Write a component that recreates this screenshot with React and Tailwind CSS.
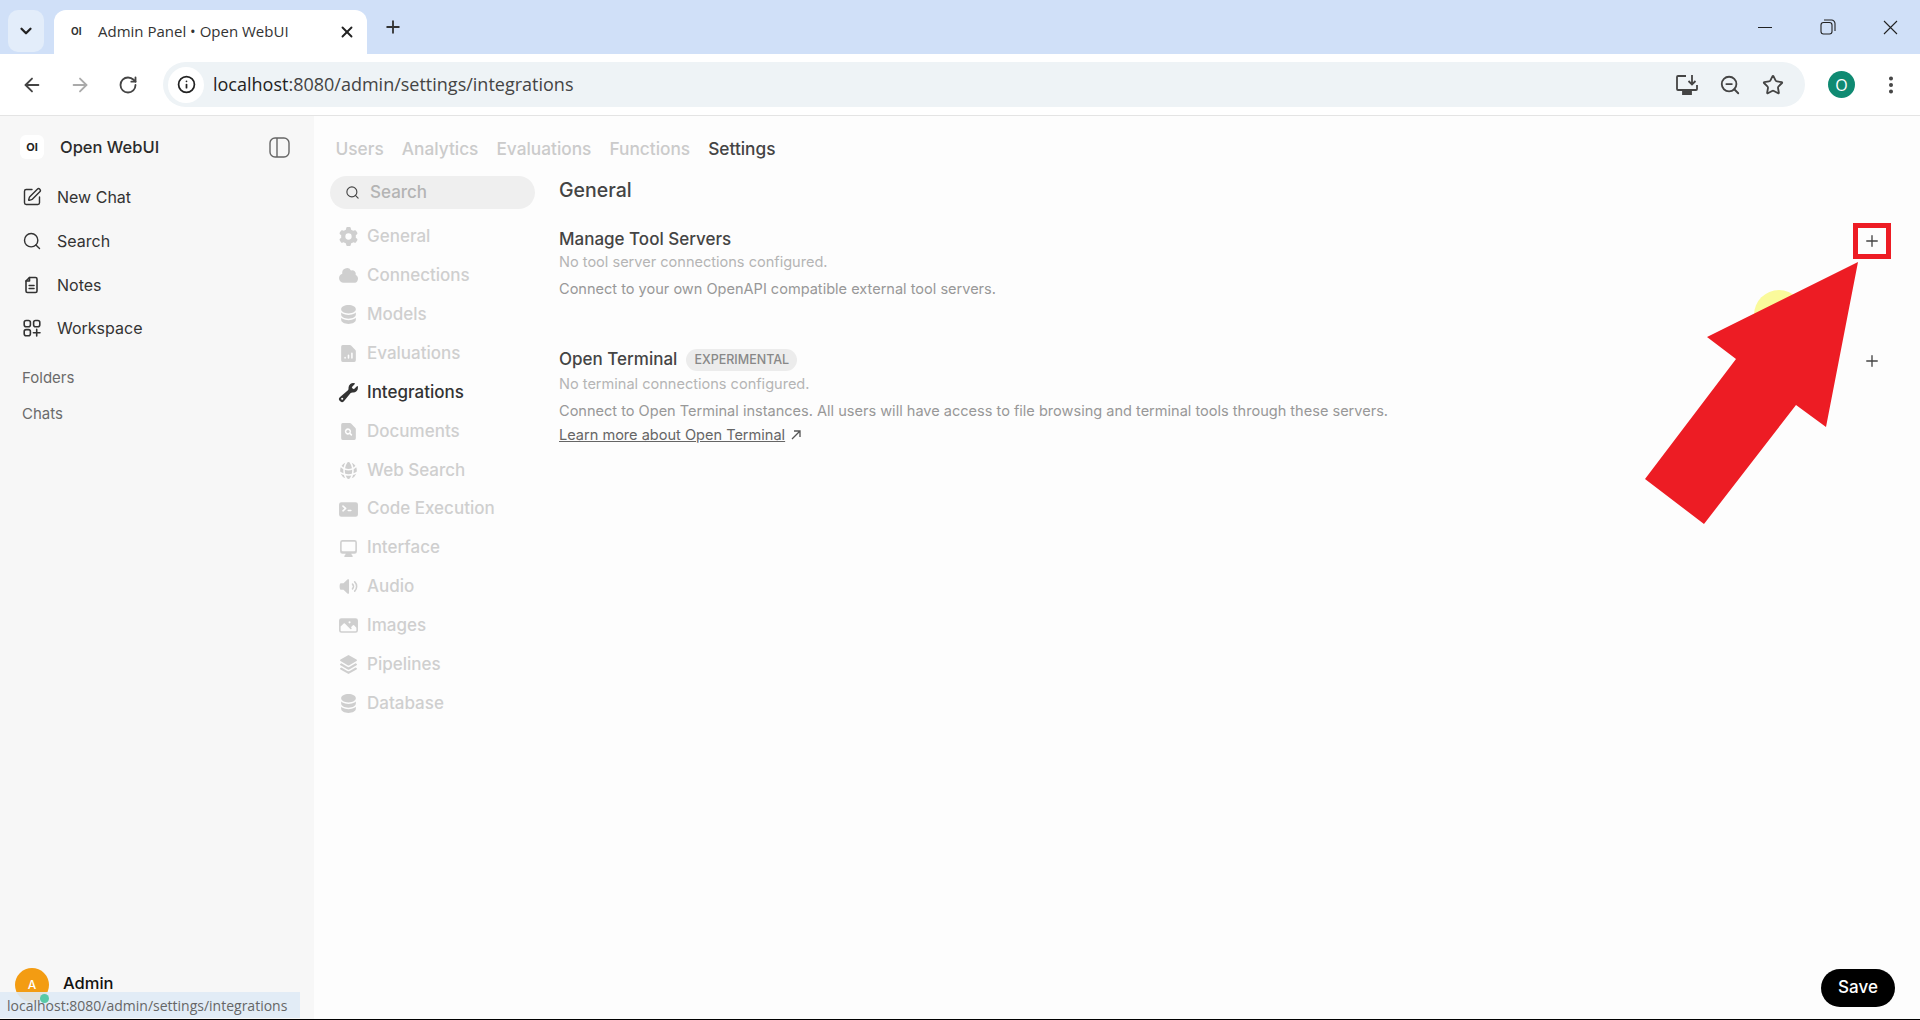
import { ArrowLeft, ArrowRight, ChevronDown, Info, MoreVertical, Plus, RotateCw, Search, SquarePen, Star, X, ZoomOut } from "lucide-react";
import {
  HiMiniCircleStack,
  HiMiniCloud,
  HiMiniCog6Tooth,
  HiMiniCommandLine,
  HiMiniComputerDesktop,
  HiMiniDocumentChartBar,
  HiMiniDocumentMagnifyingGlass,
  HiMiniGlobeAlt,
  HiMiniPhoto,
  HiMiniSpeakerWave,
  HiMiniSquare3Stack3D,
  HiMiniWrench,
} from "react-icons/hi2";

const inter = "font-['Inter',sans-serif]";
const chromeFont = "font-['Open_Sans',sans-serif]";

const topTabs = ["Users", "Analytics", "Evaluations", "Functions", "Settings"];

const settingsNav = [
  { label: "General", Icon: HiMiniCog6Tooth },
  { label: "Connections", Icon: HiMiniCloud },
  { label: "Models", Icon: HiMiniCircleStack },
  { label: "Evaluations", Icon: HiMiniDocumentChartBar },
  { label: "Integrations", Icon: HiMiniWrench, active: true },
  { label: "Documents", Icon: HiMiniDocumentMagnifyingGlass },
  { label: "Web Search", Icon: HiMiniGlobeAlt },
  { label: "Code Execution", Icon: HiMiniCommandLine },
  { label: "Interface", Icon: HiMiniComputerDesktop },
  { label: "Audio", Icon: HiMiniSpeakerWave },
  { label: "Images", Icon: HiMiniPhoto },
  { label: "Pipelines", Icon: HiMiniSquare3Stack3D },
  { label: "Database", Icon: HiMiniCircleStack },
];

const NotesIcon = () => (
  <svg width="20" height="20" viewBox="0 0 20 20" fill="none" stroke="#333" strokeWidth="1.6" strokeLinejoin="round" strokeLinecap="round">
    <path d="M7.5 2.5h6a1.5 1.5 0 0 1 1.5 1.5v12a1.5 1.5 0 0 1-1.5 1.5h-8A1.5 1.5 0 0 1 4 16V6z" />
    <path d="M7.5 2.5V6H4" />
    <path d="M7.2 10.5h4.8M7.2 13.5h4.8" />
  </svg>
);

const WorkspaceIcon = () => (
  <svg width="20" height="20" viewBox="0 0 20 20" fill="none" stroke="#333" strokeWidth="1.6" strokeLinecap="round">
    <rect x="2.2" y="2.5" width="6.2" height="6.2" rx="2" />
    <rect x="11.6" y="2.5" width="6.2" height="6.2" rx="2" />
    <rect x="2.2" y="11.6" width="6.2" height="6.2" rx="2" />
    <path d="M14.7 11.4v6.6M11.4 14.7h6.6" />
  </svg>
);

const PanelIcon = () => (
  <svg width="21" height="21" viewBox="0 0 21 21" fill="none" stroke="#666" strokeWidth="1.4">
    <rect x="1" y="1" width="19" height="19" rx="5" />
    <path d="M8 1v19" />
  </svg>
);

const InstallIcon = () => (
  <svg width="24" height="22" viewBox="0 0 24 22" fill="none" stroke="#444" strokeWidth="1.8">
    <path d="M11 2H3a1 1 0 0 0-1 1v12a1 1 0 0 0 1 1h18a1 1 0 0 0 1-1v-4" />
    <path d="M17 1v9M13.5 7l3.5 3.5L20.500 7" />
    <path d="M8 18h8v2H8z" fill="#444" />
  </svg>
);

const Tabstrip = () => (
  <div className={`h-[54px] flex items-end bg-[#d0e0f8] ${chromeFont}`}>
    <div className="ml-[8px] mb-[2px] w-[36px] h-[42px] rounded-[10px] bg-[#e3edfa] flex items-center justify-center">
      <ChevronDown size={18} strokeWidth={3} color="#222" />
    </div>
    <div className="ml-[10px] w-[313px] h-[44px] rounded-t-[12px] bg-white flex items-center pb-[1px]">
      <span className={`ml-[17px] w-[27px] text-[10px] font-bold text-[#333] ${inter}`}>OI</span>
      <span className="text-[15px] text-[#333] w-[240px]">Admin Panel • Open WebUI</span>
      <X size={18} strokeWidth={2.5} color="#222" />
    </div>
    <div className="ml-[16px] h-[54px] flex items-center">
      <Plus size={20} strokeWidth={2.2} color="#333" />
    </div>
    <div className="ml-auto h-[54px] flex items-center pr-[22px]">
      <div className="w-[14px] h-[1px] bg-[#222] mr-[48px]" />
      <svg width="16" height="16" viewBox="0 0 16 16" fill="none" stroke="#222" strokeWidth="1.1" className="mr-[47px]">
        <rect x="1" y="3.500" width="11" height="11.500" rx="2.500" />
        <path d="M4 1h7.500A3.500 3.500 0 0 1 15 4.500V12" />
      </svg>
      <svg width="15" height="15" viewBox="0 0 15 15" stroke="#222" strokeWidth="1.1">
        <path d="M1 1l13 13M14 1L1 14" />
      </svg>
    </div>
  </div>
);

const Toolbar = () => (
  <div className={`h-[62px] flex items-center bg-white border-b border-[#e4e4e4] ${chromeFont}`}>
    <div className="w-[163px] flex items-center pl-[21px] gap-[26px]">
      <ArrowLeft size={22} strokeWidth={2} color="#444" />
      <ArrowRight size={22} strokeWidth={2} color="#aaa" />
      <RotateCw size={20} strokeWidth={2.2} color="#444" className="ml-[1px]" />
    </div>
    <div className="w-[1642px] h-[45px] rounded-full bg-[#eef3f6] flex items-center">
      <div className="ml-[5px] w-[36px] h-[36px] rounded-full bg-white flex items-center justify-center">
        <Info size={19} strokeWidth={2.2} color="#222" />
      </div>
      <span className="ml-[9px] text-[18px] text-[#444]">
        <span className="text-[#222]">localhost</span>:8080/admin/settings/integrations
      </span>
      <div className="ml-auto flex items-center pr-[21px]">
        <InstallIcon />
        <ZoomOut size={22} strokeWidth={2} color="#444" className="ml-[20px]" />
        <Star size={22} strokeWidth={2} color="#444" className="ml-[21px]" />
      </div>
    </div>
    <div className="w-[27px] h-[27px] ml-[23px] rounded-full bg-[#0f8a72] text-white text-[16px] flex items-center justify-center">
      O
    </div>
    <MoreVertical size={22} strokeWidth={2.4} color="#444" className="ml-[25px]" />
  </div>
);

const SidebarRow = ({ icon, label }) => (
  <div className="h-[43.67px] flex items-center pl-[22px]">
    <span className="w-[35px] flex items-center">{icon}</span>
    <span className="text-[16px] text-[#333]">{label}</span>
  </div>
);

const Sidebar = () => (
  <div className={`w-[314px] shrink-0 bg-[#f7f7f7] flex flex-col ${inter}`}>
    <div className="h-[59.500px] pt-[3px] flex items-center pl-[20px] pr-[24px]">
      <span className="w-[24px] h-[24px] rounded-[6px] bg-white text-[11px] font-bold text-[#222] flex items-center justify-center">OI</span>
      <span className="ml-[16px] text-[16.500px] font-medium text-[#2b2b2b]">Open WebUI</span>
      <span className="ml-auto flex"><PanelIcon /></span>
    </div>
    <SidebarRow icon={<SquarePen size={20} strokeWidth={1.7} color="#333" />} label="New Chat" />
    <SidebarRow icon={<Search size={20} strokeWidth={1.7} color="#333" />} label="Search" />
    <SidebarRow icon={<NotesIcon />} label="Notes" />
    <SidebarRow icon={<WorkspaceIcon />} label="Workspace" />
    <div className="mt-[10.500px] h-[36px] flex items-center pl-[22px] text-[15px] text-[#6b6b6b]">Folders</div>
    <div className="h-[36px] flex items-center pl-[22px] text-[15px] text-[#6b6b6b]">Chats</div>
    <div className="mt-auto mb-[17px] h-[34px] flex items-center pl-[15px]">
      <div className="w-[34px] h-[34px] rounded-full bg-[#f39c12] text-white text-[12px] font-medium flex items-center justify-center">A</div>
      <span className="ml-[14px] text-[16.500px] font-medium text-[#111] -mt-[4px]">Admin</span>
    </div>
  </div>
);

const SettingsNav = () => (
  <div className="w-[205px] shrink-0">
    <div className="h-[33px] rounded-full bg-[#efefef] flex items-center pl-[15px]">
      <Search size={15} strokeWidth={1.8} color="#444" />
      <span className="ml-[10px] text-[17px] font-medium text-[#b4b4b4]">Search</span>
    </div>
    <div className="mt-[8.500px]">
      {settingsNav.map(({ label, Icon, active }) => (
        <div key={label} className={`h-[38.900px] flex items-center pl-[8px] text-[17px] font-medium ${active ? "text-[#333]" : "text-[#cfcfcf]"}`}>
          <Icon size={21} className="shrink-0" />
          <span className="ml-[8px] whitespace-nowrap">{label}</span>
        </div>
      ))}
    </div>
  </div>
);

const SectionRow = ({ children, plusClass }) => (
  <div className="h-[24px] flex items-center">
    <div className="flex items-center">{children}</div>
    <Plus size={18} strokeWidth={1.8} color="#444" className={plusClass} />
  </div>
);

const Content = () => (
  <div className="flex-1 flex flex-col pl-[24px] pr-[25px] pt-[1px] pb-[12px]">
    <div className="h-[28px] flex items-center text-[19.500px] font-medium text-[#444]">General</div>

    <div className="mt-[23px]">
      <SectionRow plusClass="ml-auto mr-[14px] mt-[2px]">
        <span className="text-[17px] font-medium text-[#444]">Manage Tool Servers</span>
      </SectionRow>
    </div>
    <div className="mt-[1px] h-[20px] flex items-center text-[14.550px] text-[#b5b5b5]">No tool server connections configured.</div>
    <div className="mt-[7px] h-[20px] flex items-center text-[14.550px] text-[#989898]">Connect to your own OpenAPI compatible external tool servers.</div>

    <div className="mt-[48px]">
      <SectionRow plusClass="ml-auto mr-[14px] mt-[2px]">
        <span className="text-[17px] font-medium text-[#444]">Open Terminal</span>
        <span className="ml-[9px] h-[22px] px-[8px] rounded-full bg-[#ececec] text-[12.500px] font-medium text-[#888] flex items-center">EXPERIMENTAL</span>
      </SectionRow>
    </div>
    <div className="mt-[3px] h-[20px] flex items-center text-[14.550px] text-[#b5b5b5]">No terminal connections configured.</div>
    <div className="mt-[7px] h-[20px] flex items-center text-[14.550px] text-[#989898]">
      Connect to Open Terminal instances. All users will have access to file browsing and terminal tools through these servers.
    </div>
    <div className="mt-[4px] h-[20px] flex items-center text-[14.550px] text-[#666]">
      <a className="underline flex items-center">
        Learn more about Open Terminal
        <svg width="14" height="14" viewBox="0 0 14 14" fill="none" stroke="#555" strokeWidth="1.300" className="ml-[4px] mb-[3px]">
          <path d="M3 11l8-8M5 3h6v6" />
        </svg>
      </a>
    </div>

    <div className="mt-auto flex justify-end">
      <button className="w-[74px] h-[38px] rounded-full bg-black text-white text-[17px] font-medium flex items-center justify-center">Save</button>
    </div>
  </div>
);

const Main = () => (
  <div className={`flex-1 min-w-0 bg-[#fdfdfd] flex flex-col pl-[16px] ${inter}`}>
    <div className="h-[60px] pt-[6px] pl-[5.500px] flex items-center gap-[18px] text-[17.300px] font-medium">
      {topTabs.map((tab) => (
        <span key={tab} className={tab === "Settings" ? "text-[#444]" : "text-[#cbcbcb]"}>{tab}</span>
      ))}
    </div>
    <div className="flex-1 flex">
      <SettingsNav />
      <Content />
    </div>
  </div>
);

// annotation drawn over the page
const Callout = () => (
  <>
    <div className="absolute left-[1754px] top-[290px] w-[50px] h-[50px] rounded-full bg-[#fafa9b]" />
    <svg className="absolute left-0 top-0" width="1920" height="1020">
      <polygon points="1858,262 1707,337 1736,359 1645,479 1704,524 1796,405 1826,427" fill="#ed1c24" />
    </svg>
    <div className="absolute left-[1853px] top-[223px] w-[38px] h-[36px] border-[5px] border-[#ed1c24]" />
  </>
);

const StatusBubble = () => (
  <>
    <div className="absolute left-[40px] top-[994px] w-[9px] h-[9px] rounded-full bg-[#58c9a6] z-10" />
    <div className={`absolute left-0 top-[992px] w-[300px] h-[26px] bg-[#dfeaf5]/90 pl-[7px] flex items-center text-[14px] text-[#666] ${chromeFont}`}>
      localhost:8080/admin/settings/integrations
    </div>
  </>
);

export default function App() {
  return (
    <div className="relative w-[1920px] h-[1020px] overflow-hidden flex flex-col bg-white">
      <Tabstrip />
      <Toolbar />
      <div className="flex-1 flex min-h-0">
        <Sidebar />
        <Main />
      </div>
      <div className="h-[1px] bg-black" />
      <Callout />
      <StatusBubble />
    </div>
  );
}
